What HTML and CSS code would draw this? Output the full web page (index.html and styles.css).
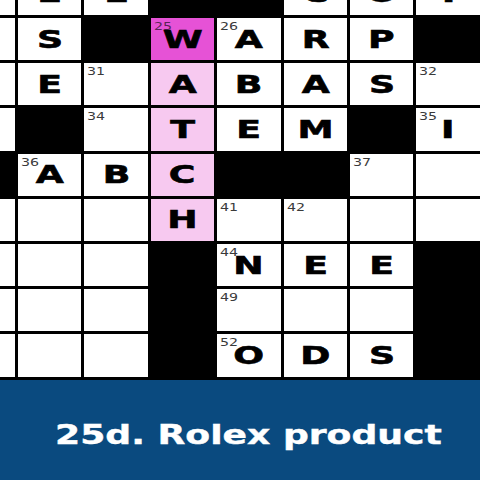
FILE: index.html
```html
<!DOCTYPE html>
<html lang="en">
<head>
<meta charset="utf-8">
<title>Crossword</title>
<link rel="stylesheet" href="styles.css">
</head>
<body>
<div class="page">
  <div class="board">
    <div class="grid">
      <!-- row 0 -->
      <div class="cell"></div>
      <div class="cell"><span class="letter">E</span></div>
      <div class="cell"><span class="letter">E</span></div>
      <div class="cell block"></div>
      <div class="cell block"></div>
      <div class="cell"><span class="letter">C</span></div>
      <div class="cell"><span class="letter">O</span></div>
      <div class="cell"><span class="letter">T</span></div>
      <!-- row 1 -->
      <div class="cell"></div>
      <div class="cell"><span class="letter">S</span></div>
      <div class="cell block"></div>
      <div class="cell active"><span class="num">25</span><span class="letter">W</span></div>
      <div class="cell"><span class="num">26</span><span class="letter">A</span></div>
      <div class="cell"><span class="letter">R</span></div>
      <div class="cell"><span class="letter">P</span></div>
      <div class="cell block"></div>
      <!-- row 2 -->
      <div class="cell"></div>
      <div class="cell"><span class="letter">E</span></div>
      <div class="cell"><span class="num">31</span></div>
      <div class="cell word"><span class="letter">A</span></div>
      <div class="cell"><span class="letter">B</span></div>
      <div class="cell"><span class="letter">A</span></div>
      <div class="cell"><span class="letter">S</span></div>
      <div class="cell"><span class="num">32</span></div>
      <!-- row 3 -->
      <div class="cell"></div>
      <div class="cell block"></div>
      <div class="cell"><span class="num">34</span></div>
      <div class="cell word"><span class="letter">T</span></div>
      <div class="cell"><span class="letter">E</span></div>
      <div class="cell"><span class="letter">M</span></div>
      <div class="cell block"></div>
      <div class="cell"><span class="num">35</span><span class="letter">I</span></div>
      <!-- row 4 -->
      <div class="cell block"></div>
      <div class="cell"><span class="num">36</span><span class="letter">A</span></div>
      <div class="cell"><span class="letter">B</span></div>
      <div class="cell word"><span class="letter">C</span></div>
      <div class="cell block"></div>
      <div class="cell block"></div>
      <div class="cell"><span class="num">37</span></div>
      <div class="cell"></div>
      <!-- row 5 -->
      <div class="cell"></div>
      <div class="cell"></div>
      <div class="cell"></div>
      <div class="cell word"><span class="letter">H</span></div>
      <div class="cell"><span class="num">41</span></div>
      <div class="cell"><span class="num">42</span></div>
      <div class="cell"></div>
      <div class="cell"></div>
      <!-- row 6 -->
      <div class="cell"></div>
      <div class="cell"></div>
      <div class="cell"></div>
      <div class="cell block"></div>
      <div class="cell"><span class="num">44</span><span class="letter">N</span></div>
      <div class="cell"><span class="letter">E</span></div>
      <div class="cell"><span class="letter">E</span></div>
      <div class="cell block"></div>
      <!-- row 7 -->
      <div class="cell"></div>
      <div class="cell"></div>
      <div class="cell"></div>
      <div class="cell block"></div>
      <div class="cell"><span class="num">49</span></div>
      <div class="cell"></div>
      <div class="cell"></div>
      <div class="cell block"></div>
      <!-- row 8 -->
      <div class="cell"></div>
      <div class="cell"></div>
      <div class="cell"></div>
      <div class="cell block"></div>
      <div class="cell"><span class="num">52</span><span class="letter">O</span></div>
      <div class="cell"><span class="letter">D</span></div>
      <div class="cell"><span class="letter">S</span></div>
      <div class="cell block"></div>
    </div>
  </div>
  <div class="clue-bar">
    <span class="clue">25d. Rolex product</span>
  </div>
</div>
</body>
</html>
```
FILE: styles.css
```css
html, body {
  margin: 0;
  padding: 0;
}

body {
  width: 480px;
  height: 480px;
  overflow: hidden;
  background: #000;
  font-family: "DejaVu Sans", "Liberation Sans", sans-serif;
}

.page {
  display: flex;
  flex-direction: column;
  width: 480px;
  height: 480px;
}

.board {
  flex: none;
  height: 379.6px;
  overflow: hidden;
  background: #000;
}

.grid {
  display: grid;
  grid-template-columns: repeat(8, 63.4px);
  grid-auto-rows: 42.2px;
  gap: 3px;
  margin-left: -48.4px;
  margin-top: -27.2px;
}

.cell {
  position: relative;
  background: #fff;
  display: flex;
  align-items: center;
  justify-content: center;
}

.cell.block {
  background: #000;
}

.cell.active {
  background: #e652d6;
}

.cell.word {
  background: #f7c9f0;
}

.letter {
  display: inline-block;
  font-size: 25px;
  font-weight: bold;
  line-height: 1;
  color: #000;
  -webkit-text-stroke: 0.6px #000;
  transform: scaleX(1.45);
}

.num {
  position: absolute;
  left: 3px;
  top: 3px;
  font-size: 10.5px;
  line-height: 1;
  color: #3a3a3a;
  transform: scaleX(1.35);
  transform-origin: left top;
}

.cell.active .num {
  color: #5a2356;
}

.clue-bar {
  flex: 1;
  display: flex;
  align-items: center;
  padding: 10px 0 0 55px;
  background: #0a4a7f;
}

.clue {
  display: inline-block;
  font-size: 26px;
  font-weight: bold;
  line-height: 1;
  color: #fff;
  -webkit-text-stroke: 0.4px #fff;
  transform: scaleX(1.39);
  transform-origin: left center;
  white-space: nowrap;
}
```
